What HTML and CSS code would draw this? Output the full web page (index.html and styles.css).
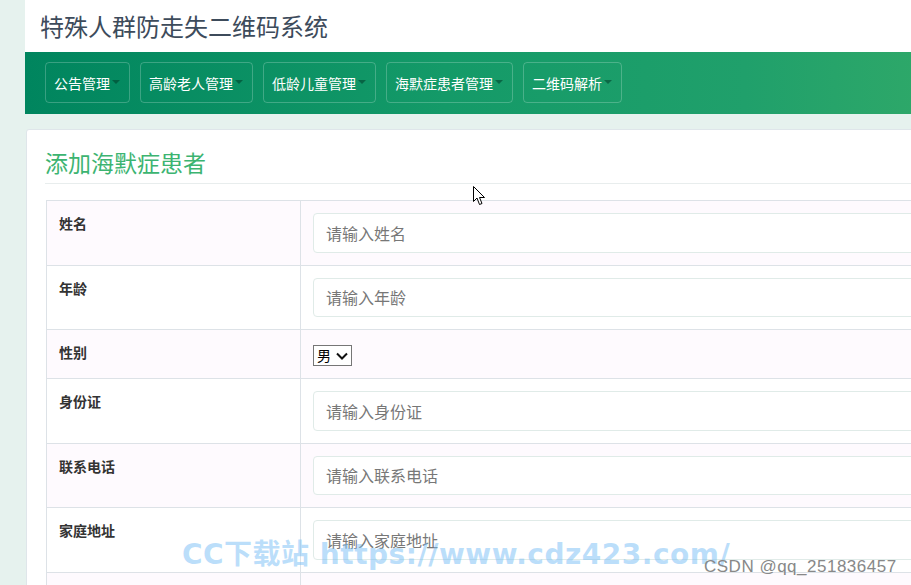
FILE: index.html
```html
<!DOCTYPE html>
<html lang="zh-CN">
<head>
    <meta charset="UTF-8">
    <meta name="viewport" content="width=device-width, initial-scale=1.0">
    <title>特殊人群防走失二维码系统</title>
    <link rel="stylesheet" href="styles.css">
</head>
<body>
    <div class="main">
        <div class="header">特殊人群防走失二维码系统</div>
        <div class="nav">
            <a class="nav-btn">公告管理<span class="caret"></span></a>
            <a class="nav-btn">高龄老人管理<span class="caret"></span></a>
            <a class="nav-btn">低龄儿童管理<span class="caret"></span></a>
            <a class="nav-btn">海默症患者管理<span class="caret"></span></a>
            <a class="nav-btn">二维码解析<span class="caret"></span></a>
        </div>

        <div class="card">
            <h2 class="card-title">添加海默症患者</h2>
            <table class="form-table">
                <tr>
                    <th>姓名</th>
                    <td><input type="text" class="form-input" placeholder="请输入姓名"></td>
                </tr>
                <tr>
                    <th>年龄</th>
                    <td><input type="text" class="form-input" placeholder="请输入年龄"></td>
                </tr>
                <tr class="select-row">
                    <th>性别</th>
                    <td>
                        <select class="form-select">
                            <option>男</option>
                            <option>女</option>
                        </select>
                    </td>
                </tr>
                <tr>
                    <th>身份证</th>
                    <td><input type="text" class="form-input" placeholder="请输入身份证"></td>
                </tr>
                <tr>
                    <th>联系电话</th>
                    <td><input type="text" class="form-input" placeholder="请输入联系电话"></td>
                </tr>
                <tr>
                    <th>家庭地址</th>
                    <td><input type="text" class="form-input" placeholder="请输入家庭地址"></td>
                </tr>
                <tr>
                    <th>备注</th>
                    <td><input type="text" class="form-input" placeholder="请输入备注"></td>
                </tr>
            </table>
        </div>
    </div>

    <!-- mouse pointer and watermarks captured in the screenshot -->
    <svg class="pointer" width="12" height="20" viewBox="0 0 12 20">
        <path d="M0.5 0.5 L0.5 15.5 L4 12 L6.5 18.5 L9 17.5 L6.5 11.5 L11.5 11.5 Z" fill="#fff" stroke="#000" stroke-width="1"/>
    </svg>
    <div class="watermark">CC下载站 https://www.cdz423.com/</div>
    <div class="csdn">CSDN @qq_251836457</div>
</body>
</html>
```

FILE: styles.css
```css
html, body {
    overflow: hidden;
}
body {
    margin: 0;
    background: #e6f2ee;
    font-family: "Noto Sans CJK SC", "Noto Sans", sans-serif;
    color: #333;
}
.main {
    margin-left: 25px;
    width: 1200px;
}
.header {
    height: 52px;
    line-height: 52px;
    background: #fff;
    padding-left: 15px;
    font-size: 24px;
    color: #3d4b5b;
}
.nav {
    height: 62px;
    box-sizing: border-box;
    padding: 10px 0 0 20px;
    display: flex;
    gap: 10px;
    background: linear-gradient(to right, #00855e 0%, #149a68 35%, #20a06b 60%, #2ea869 75%, #35ab6c 100%);
}
.nav-btn {
    height: 41px;
    box-sizing: border-box;
    padding: 0 9px 0 8px;
    display: flex;
    align-items: center;
    border: 1px solid rgba(255, 255, 255, 0.22);
    border-radius: 4px;
    color: #fff;
    font-size: 14px;
}
.caret {
    margin-left: 2px;
    border-top: 4px solid rgba(0, 60, 40, 0.55);
    border-left: 4px solid transparent;
    border-right: 4px solid transparent;
    margin-top: -2px;
}
.card {
    margin: 15px 0 0 1px;
    background: #fff;
    border: 1px solid #dfe6ea;
    border-radius: 3px;
    padding: 15px 0 0 18px;
    height: 600px;
}
.card-title {
    margin: 0;
    font-size: 23px;
    font-weight: normal;
    line-height: 34px;
    padding-bottom: 4px;
    color: #3cb471;
    border-bottom: 1px solid #e8eded;
}
.form-table {
    margin-top: 16px;
    margin-left: 1px;
    width: 100%;
    border-collapse: collapse;
}
.form-table th,
.form-table td {
    border: 1px solid #dde2e7;
    padding: 12px;
    line-height: 24px;
    vertical-align: top;
    text-align: left;
}
.form-table th {
    width: 229px;
    padding-top: 10px;
    padding-left: 12px;
    font-size: 14px;
    font-weight: bold;
    color: #333;
}
.form-table tr:nth-child(odd) {
    background: #fefafe;
}
.select-row td {
    padding-top: 15px;
    padding-bottom: 12px;
    line-height: 21px;
}
.form-input {
    display: block;
    width: 100%;
    height: 39.5px;
    box-sizing: border-box;
    border: 1px solid #e0ebe8;
    border-radius: 4px;
    padding: 0 12px;
    font-family: "Noto Sans CJK SC", sans-serif;
    font-size: 16px;
    background: #fff;
    outline: none;
}
.form-input::placeholder {
    color: #777;
}
.form-select {
    display: block;
    appearance: none;
    -webkit-appearance: none;
    width: 39px;
    height: 21px;
    box-sizing: border-box;
    margin: 0;
    padding: 0 0 0 3px;
    border: 1px solid #767676;
    border-radius: 0;
    font-family: "Noto Sans CJK SC", sans-serif;
    font-size: 14px;
    line-height: 19px;
    color: #000;
    background: #fff url("data:image/svg+xml,%3Csvg xmlns='http://www.w3.org/2000/svg' width='12' height='8' viewBox='0 0 12 8'%3E%3Cpath d='M1 1.5 L6 6.5 L11 1.5' fill='none' stroke='%23111' stroke-width='2'/%3E%3C/svg%3E") no-repeat right 3px center;
}
.pointer {
    position: absolute;
    left: 473px;
    top: 186px;
}
.watermark {
    position: absolute;
    left: 182px;
    top: 532px;
    font-family: "DejaVu Sans", "Noto Sans CJK SC", sans-serif;
    font-weight: bold;
    font-size: 28px;
    letter-spacing: 0.5px;
    color: rgba(120, 190, 245, 0.5);
    white-space: nowrap;
}
.csdn {
    position: absolute;
    left: 704px;
    top: 557px;
    font-family: "Liberation Sans", Arial, sans-serif;
    font-size: 17px;
    letter-spacing: 0.5px;
    color: #888;
    white-space: nowrap;
}
```
